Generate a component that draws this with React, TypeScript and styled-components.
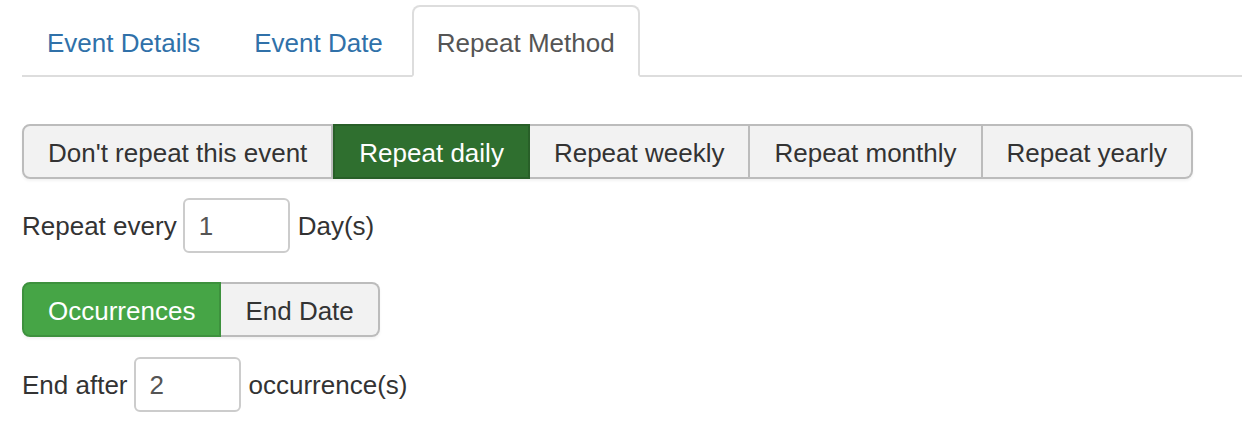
import React, { useState } from "react";
import styled, { createGlobalStyle, css } from "styled-components";

const Global = createGlobalStyle`
  html, body { margin: 0; padding: 0; background: #ffffff; }
  body {
    font-family: "Liberation Sans", Arial, Helvetica, sans-serif;
    color: #333333;
    font-size: 26px;
  }
  * { box-sizing: border-box; }
`;

const Page = styled.div`
  padding: 5px 0 0 22px;
`;

const Tabs = styled.ul`
  display: flex;
  list-style: none;
  margin: 0 0 47px 0;
  padding: 0;
  border-bottom: 2px solid #dddddd;
`;

const TabItem = styled.li`
  margin-bottom: -2px;
`;

const TabLink = styled.a<{ $active?: boolean }>`
  display: block;
  padding: 18px 23px 14px;
  line-height: 36px;
  margin-right: 4px;
  border: 2px solid transparent;
  border-radius: 8px 8px 0 0;
  text-decoration: none;
  cursor: pointer;
  color: #3071a9;
  ${(p) =>
    p.$active &&
    css`
      color: #555555;
      background: #ffffff;
      border-color: #dddddd;
      border-bottom-color: transparent;
    `}
`;

const ButtonGroup = styled.div`
  display: inline-flex;
  border-radius: 8px;
  box-shadow: 0 2px 3px rgba(0, 0, 0, 0.05);
`;

const GroupButton = styled.button<{ $variant?: "dark" | "green" }>`
  position: relative;
  font-family: inherit;
  font-size: 26px;
  line-height: 35px;
  padding: 10px 24px 6px;
  border: 2px solid #bcbcbc;
  border-left-width: 0;
  background: #f2f2f2;
  color: #333333;
  margin: 0;
  cursor: pointer;
  &:first-child {
    border-left-width: 2px;
    border-radius: 8px 0 0 8px;
  }
  &:last-child {
    border-radius: 0 8px 8px 0;
  }
  ${(p) =>
    p.$variant === "dark" &&
    css`
      z-index: 1;
      background: #2f6f2f;
      border-color: #285f28;
      border-left-width: 2px;
      color: #ffffff;
    `}
  ${(p) =>
    p.$variant === "green" &&
    css`
      z-index: 1;
      background: #46a546;
      border-color: #3d913d;
      color: #ffffff;
    `}
`;

const Row = styled.div<{ $top: number; $bottom: number }>`
  display: flex;
  align-items: center;
  margin: ${(p) => p.$top}px 0 ${(p) => p.$bottom}px 0;
`;

const Label = styled.span`
  line-height: 36px;
`;

const NumberInput = styled.input`
  width: 107px;
  height: 55px;
  margin: 0 8px 0 6px;
  padding: 2px 14px 0;
  border: 2px solid #cccccc;
  border-radius: 6px;
  font-family: inherit;
  font-size: 26px;
  color: #555555;
  background: #ffffff;
  outline: none;
`;

const repeatOptions = [
  "Don't repeat this event",
  "Repeat daily",
  "Repeat weekly",
  "Repeat monthly",
  "Repeat yearly",
];

export default function App() {
  const [repeat, setRepeat] = useState(1);
  const [endMode, setEndMode] = useState(0);
  const tabs = ["Event Details", "Event Date", "Repeat Method"];
  const [tab, setTab] = useState(2);

  return (
    <Page>
      <Global />
      <Tabs>
        {tabs.map((t, i) => (
          <TabItem key={t}>
            <TabLink $active={i === tab} onClick={() => setTab(i)}>
              {t}
            </TabLink>
          </TabItem>
        ))}
      </Tabs>

      <ButtonGroup>
        {repeatOptions.map((o, i) => (
          <GroupButton
            key={o}
            $variant={i === repeat ? "dark" : undefined}
            onClick={() => setRepeat(i)}
          >
            {o}
          </GroupButton>
        ))}
      </ButtonGroup>

      <Row $top={19} $bottom={29}>
        <Label>Repeat every</Label>
        <NumberInput defaultValue="1" />
        <Label>Day(s)</Label>
      </Row>

      <ButtonGroup>
        {["Occurrences", "End Date"].map((o, i) => (
          <GroupButton
            key={o}
            $variant={i === endMode ? "green" : undefined}
            onClick={() => setEndMode(i)}
          >
            {o}
          </GroupButton>
        ))}
      </ButtonGroup>

      <Row $top={20} $bottom={0}>
        <Label>End after</Label>
        <NumberInput defaultValue="2" />
        <Label>occurrence(s)</Label>
      </Row>
    </Page>
  );
}
